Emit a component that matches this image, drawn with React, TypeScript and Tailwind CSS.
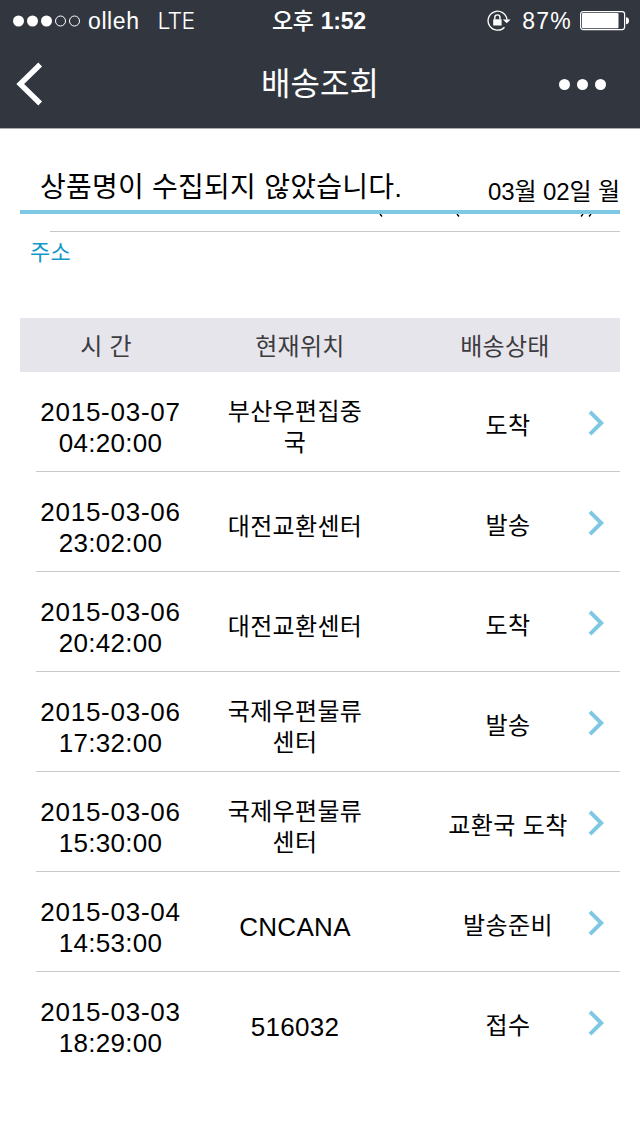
import React from 'react';
import clsx from 'clsx';

interface TrackingStep {
  time: [string, string];
  place: string[];
  status: string;
}

const steps: TrackingStep[] = [
  { time: ['2015-03-07', '04:20:00'], place: ['부산우편집중', '국'], status: '도착' },
  { time: ['2015-03-06', '23:02:00'], place: ['대전교환센터'], status: '발송' },
  { time: ['2015-03-06', '20:42:00'], place: ['대전교환센터'], status: '도착' },
  { time: ['2015-03-06', '17:32:00'], place: ['국제우편물류', '센터'], status: '발송' },
  { time: ['2015-03-06', '15:30:00'], place: ['국제우편물류', '센터'], status: '교환국 도착' },
  { time: ['2015-03-04', '14:53:00'], place: ['CNCANA'], status: '발송준비' },
  { time: ['2015-03-03', '18:29:00'], place: ['516032'], status: '접수' },
];

const isLatin = (text: string) => /^[\x20-\x7e]+$/.test(text);

function StatusBar() {
  return (
    <div className="grid h-10 grid-cols-[1fr_auto_1fr] items-center pt-px pl-[13px] pr-[10px] leading-10">
      <div className="flex items-center">
        <svg width="68" height="12" viewBox="0 0 68 12" fill="none">
          <circle cx="5.5" cy="6" r="5.5" fill="white" />
          <circle cx="19.5" cy="6" r="5.5" fill="white" />
          <circle cx="33.5" cy="6" r="5.5" fill="white" />
          <circle cx="47.5" cy="6" r="5" stroke="white" />
          <circle cx="61.5" cy="6" r="5" stroke="white" />
        </svg>
        <span className="ml-[7px] text-[23px] tracking-[0.6px]">olleh</span>
        <span className="ml-[18px] font-['Inter'] text-[23px] font-light tracking-[-0.8px]">LTE</span>
      </div>
      <div className="mr-[5px] flex items-center gap-[7px] text-[23px]">
        <span className="font-medium tracking-[-0.4px]">오후</span>
        <span className="font-bold tracking-[-0.2px]">1:52</span>
      </div>
      <div className="flex items-center justify-end">
        <svg width="24" height="22" viewBox="0 0 24 22" fill="none">
          <path d="M17.5 17.2A9.5 9.5 0 1 1 20 9.6" stroke="white" strokeWidth="1.3" />
          <path d="M15.8 9.4H23.6L19.7 13.2Z" fill="white" />
          <rect x="6.2" y="9.3" width="8.4" height="6.2" fill="white" />
          <path d="M7.8 9.5V7.5a2.6 2.6 0 0 1 5.2 0V9.5" stroke="white" strokeWidth="1.4" />
        </svg>
        <span className="ml-[11px] text-[23px] tracking-[1.2px]">87%</span>
        <svg className="ml-2" width="50" height="20" viewBox="0 0 50 20" fill="none">
          <rect x="0.6" y="0.6" width="44" height="18" rx="2.5" stroke="white" strokeWidth="1.2" />
          <rect x="2" y="2" width="36.5" height="15.3" rx="1" fill="white" />
          <path d="M46 6.3C48 6.3 49 7.5 49 9.8s-1 3.5-3 3.5Z" fill="white" />
        </svg>
      </div>
    </div>
  );
}

function NavBar() {
  return (
    <div className="grid h-[88px] grid-cols-[1fr_auto_1fr] items-center px-4">
      <svg width="28" height="44" viewBox="0 0 28 44" fill="none">
        <path d="M24.2 2.5 4.2 22 24.2 41.5" stroke="white" strokeWidth="5.4" />
      </svg>
      <h1 className="text-[32px] leading-[88px]">배송조회</h1>
      <div className="mr-[18px] flex justify-end gap-[7px]">
        <i className="size-[11px] rounded-full bg-white" />
        <i className="size-[11px] rounded-full bg-white" />
        <i className="size-[11px] rounded-full bg-white" />
      </div>
    </div>
  );
}

function TrackingRow({ step, last }: { step: TrackingStep; last: boolean }) {
  return (
    <li className={clsx('ml-4 flex h-[100px] items-center border-b pt-3', last ? 'border-transparent' : 'border-[#c8c7cc]')}>
      <div className="w-[149px] text-center text-[26px] leading-[31px]">
        <div className="tracking-[0.75px]">{step.time[0]}</div>
        <div className="tracking-[0.3px]">{step.time[1]}</div>
      </div>
      <div className="ml-[30px] w-[160px] text-center">
        {step.place.map((line) => (
          <div
            key={line}
            className={clsx(
              'leading-[31px]',
              isLatin(line) ? 'text-[26px] tracking-[0.3px]' : '-mt-px mb-px text-2xl tracking-[0.35px]'
            )}
          >
            {line}
          </div>
        ))}
      </div>
      <div className="mb-1 ml-[53px] w-[160px] text-center text-2xl leading-[31px] tracking-[0.4px]">{step.status}</div>
      <svg className="-mt-2.5 shrink-0" width="18" height="26" viewBox="0 0 18 26" fill="none">
        <path d="M2 1.8 13.2 13 2 24.2" stroke="#7ec8e3" strokeWidth="4" />
      </svg>
    </li>
  );
}

export default function App() {
  return (
    <div className="h-[1136px] w-[640px] overflow-hidden bg-white font-['Liberation_Sans','Noto_Sans_CJK_KR',sans-serif] text-black">
      <header className="h-[129px] border-b border-[#a9abae] bg-[#32373f] text-white">
        <StatusBar />
        <NavBar />
      </header>

      <main className="px-5">
        <div className="flex h-[85px] items-end justify-between border-b-4 border-[#7ec8e3] pl-5">
          <h2 className="text-[28px] leading-[45px] tracking-[0.25px]">상품명이 수집되지 않았습니다.</h2>
          <p className="text-2xl leading-[36px] tracking-[-0.1px]">03월 02일 월</p>
        </div>

        {/* row scrolled under the product bar, only the descenders are left */}
        <div className="ml-[30px] flex h-[18px] items-start border-b border-[#c8c7cc]">
          <svg className="ml-[329px]" width="216" height="3" viewBox="0 0 216 3" fill="none">
            <path d="M1 0 3 2.5M78 0l2 2.5M204 0l-2 2.5M212 0l-2 2.5" stroke="black" strokeWidth="1.4" />
          </svg>
        </div>
        <p className="ml-2.5 h-[86px] text-[22px] leading-[42px] tracking-[0.3px] text-[#1298c8]">주소</p>

        <div className="flex h-[54px] bg-[#e6e5eb] pt-0.5 text-2xl leading-[54px] tracking-[0.3px] text-[#3c3b40]">
          <span className="ml-[6px] w-40 text-center">시 간</span>
          <span className="ml-[34px] w-40 text-center">현재위치</span>
          <span className="ml-[45px] w-40 text-center">배송상태</span>
        </div>

        <ul>
          {steps.map((step, i) => (
            <TrackingRow key={step.time.join(' ')} step={step} last={i === steps.length - 1} />
          ))}
        </ul>
      </main>
    </div>
  );
}
